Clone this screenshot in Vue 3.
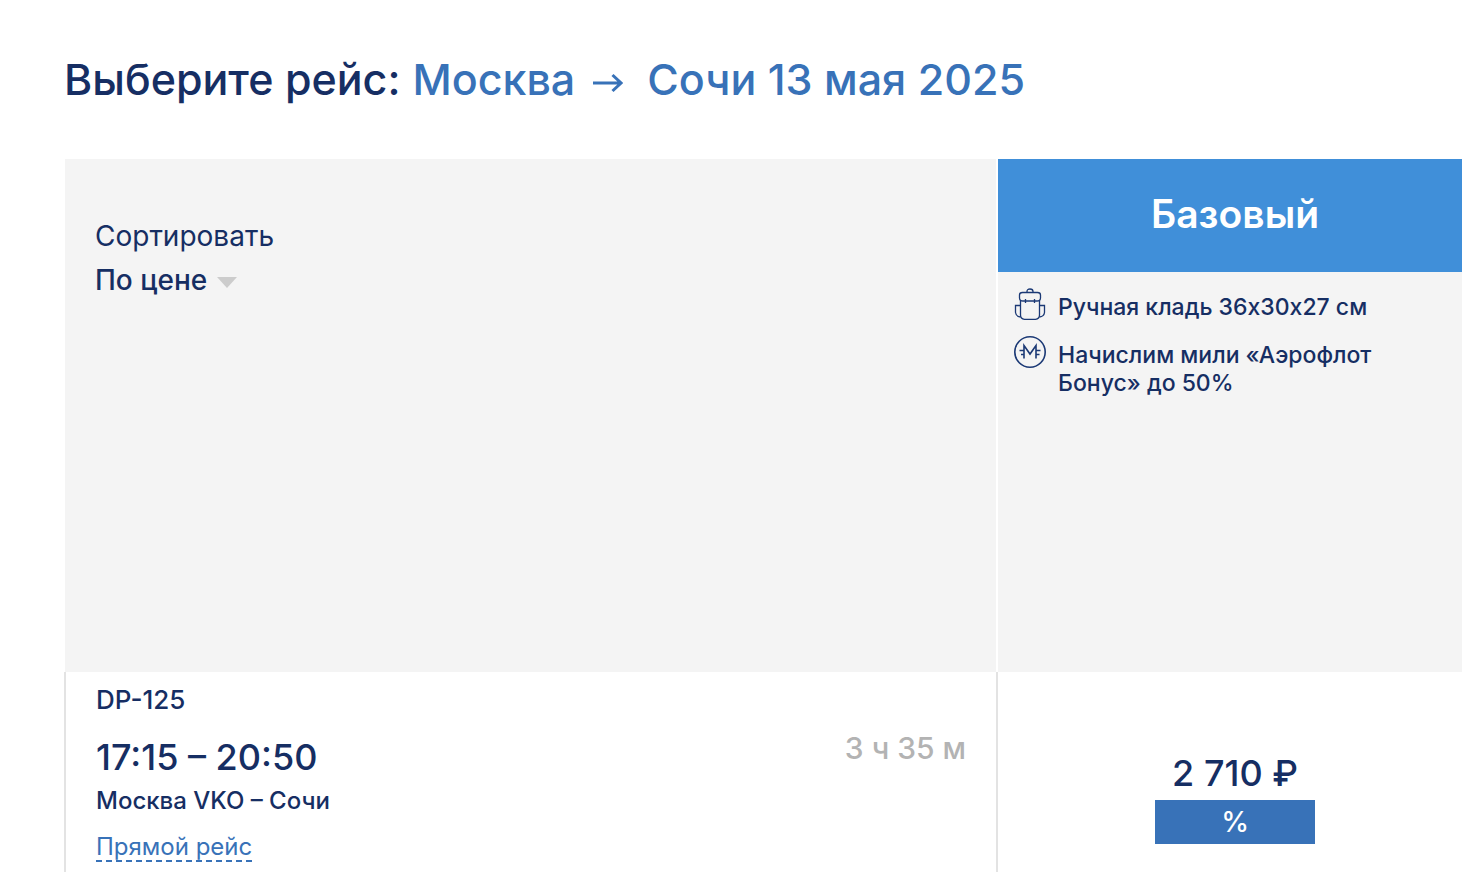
<script setup>
import { ref } from 'vue'

const sort = ref('price')
const route = { from: 'Москва', to: 'Сочи', date: '13 мая 2025' }
const flights = [
  {
    number: 'DP-125',
    time: '17:15 – 20:50',
    places: 'Москва VKO – Сочи',
    duration: '3 ч 35 м',
    price: '2 710 ₽',
  },
]
</script>

<template>
  <main class="page">
    <h1 class="title">
      <span>Выберите рейс:</span>
      <span class="route">
        <span>{{ route.from }}</span>
        <svg class="arrow" viewBox="0 0 30 20" aria-hidden="true">
          <path d="M0 10H28M19.500 2L28 10L19.500 18" />
        </svg>
        <span>{{ route.to }} {{ route.date }}</span>
      </span>
    </h1>

    <table class="fares">
      <colgroup>
        <col class="col-flight" />
        <col />
      </colgroup>
      <thead>
        <tr>
          <th class="sort-cell">
            <label class="sort-label" for="sort">Сортировать</label>
            <div class="sort-box">
              <select id="sort" v-model="sort" class="sort-select">
                <option value="price">По цене</option>
              </select>
              <svg class="caret" viewBox="0 0 20 11" aria-hidden="true">
                <path d="M0 0H20L10 11Z" />
              </svg>
            </div>
          </th>
          <th class="fare-cell" scope="col">
            <div class="fare-name">Базовый</div>
            <ul class="perks">
              <li>
                <svg class="perk-icon" viewBox="0 0 32 32" aria-hidden="true">
                  <path d="M13 4.500V3.500Q13 1 16 1T19 3.500V4.500" />
                  <path d="M8.500 4.500H23.500Q26.500 4.500 26.500 7V10Q26.500 13 23 13H9Q5.500 13 5.500 10V7Q5.500 4.500 8.500 4.500Z" />
                  <path d="M11.500 11V15M20.500 11V15M6.500 12V27Q6.500 31 10.500 31.300H21.500Q25.500 31 25.500 27V12" />
                  <path d="M6.500 17.500H1.500V24.500Q2 28.500 6.500 29M25.500 17.500H30.500V24.500Q30 28.500 25.500 29" />
                </svg>
                <span>Ручная кладь 36х30х27 см</span>
              </li>
              <li>
                <svg class="perk-icon miles" viewBox="0 0 32 32" aria-hidden="true">
                  <circle cx="16" cy="16" r="15.200" />
                  <path d="M10 22.500V9.500L16 18L22 9.500V22.500" />
                  <path d="M5.500 14.500H10M7 18.500H10M22 14.500H26.500M22 18.500H25.500" />
                </svg>
                <span>Начислим мили «Аэрофлот Бонус» до 50%</span>
              </li>
            </ul>
          </th>
        </tr>
      </thead>
      <tbody>
        <tr v-for="flight in flights" :key="flight.number">
          <td class="flight-cell">
            <div class="number">{{ flight.number }}</div>
            <div class="flight-row">
              <div>
                <div class="time">{{ flight.time }}</div>
                <div class="places">{{ flight.places }}</div>
              </div>
              <div class="duration">{{ flight.duration }}</div>
            </div>
            <a class="direct" href="#">Прямой рейс</a>
          </td>
          <td class="price-cell">
            <button class="price" type="button">
              <span>{{ flight.price }}</span>
              <span class="badge">%</span>
            </button>
          </td>
        </tr>
      </tbody>
    </table>
  </main>
</template>

<style>
html,
body {
  background: #fff;
  overflow: hidden;
}
</style>

<style scoped>
.page {
  box-sizing: border-box;
  padding: 49px 0 0 64px;
  color: #162e63;
  font-family: Inter, "Liberation Sans", sans-serif;
  font-weight: 500;
}
.title {
  display: flex;
  gap: 12px;
  margin: 0 0 50px;
  font-size: 43px;
  line-height: 60px;
  font-weight: 500;
  white-space: nowrap;
}
.route {
  display: flex;
  align-items: center;
  color: #3872b8;
}
.arrow {
  width: 30px;
  height: 20px;
  margin: 8px 24px 0 18px;
  fill: none;
  stroke: currentColor;
  stroke-width: 3;
}
.fares {
  width: calc(100% + 10px);
  table-layout: fixed;
  border-collapse: separate;
  border-spacing: 0;
}
.col-flight {
  width: 66.200%;
}
th,
td {
  box-sizing: border-box;
  padding: 0;
  vertical-align: top;
  text-align: left;
  font-weight: 500;
}
.sort-cell,
.fare-cell {
  height: 513px;
  background: #f4f4f4;
  border-left: 2px solid #fff;
}
.sort-cell {
  padding: 55px 30px 0;
  border-left-width: 1px;
}
.sort-label {
  display: block;
  font-size: 28px;
  line-height: 44px;
  font-weight: 400;
}
.sort-box {
  display: flex;
  align-items: center;
  gap: 10px;
}
.sort-select {
  appearance: none;
  field-sizing: content;
  padding: 0;
  border: 0;
  background: none;
  color: inherit;
  font: inherit;
  font-size: 28px;
  line-height: 44px;
}
.caret {
  width: 20px;
  height: 11px;
  margin-top: 4px;
  fill: #ccc;
}
.fare-name {
  height: 113px;
  background: #408fd9;
  color: #fff;
  font-size: 39px;
  line-height: 110px;
  font-weight: 600;
  text-align: center;
}
.perks {
  display: flex;
  flex-direction: column;
  gap: 15px;
  margin: 0;
  padding: 16px 60px 0 16px;
  list-style: none;
  font-size: 23px;
  line-height: 28px;
  font-weight: 500;
}
.perks li {
  display: flex;
  gap: 12px;
}
.perks span {
  padding-top: 5px;
}
.perk-icon {
  flex: none;
  width: 32px;
  height: 32px;
  fill: none;
  stroke: #1b3975;
  stroke-width: 1.300;
}
.miles {
  stroke-width: 1.600;
}
.flight-cell,
.price-cell {
  height: 220px;
  border-left: 2px solid #e3e3e3;
}
.flight-cell {
  padding: 8px 30px 0;
}
.number {
  font-size: 26px;
  line-height: 40px;
}
.flight-row {
  display: flex;
  justify-content: space-between;
  padding-top: 12px;
}
.time {
  font-size: 36px;
  line-height: 50px;
}
.places {
  font-size: 24px;
  line-height: 38px;
}
.duration {
  color: #b3b3b3;
  font-size: 30px;
  line-height: 32px;
}
.direct {
  display: inline-block;
  margin-top: 14px;
  border-bottom: 2px dashed #3872b8;
  color: #3872b8;
  font-size: 24px;
  line-height: 26px;
  font-weight: 400;
  text-decoration: none;
}
.price-cell {
  padding-top: 74px;
  text-align: center;
}
.price {
  display: inline-flex;
  flex-direction: column;
  align-items: stretch;
  width: 160px;
  padding: 0;
  border: 0;
  background: none;
  color: inherit;
  font: inherit;
  font-size: 36px;
  line-height: 54px;
}
.badge {
  background: #3872b8;
  color: #fff;
  font-size: 28px;
  line-height: 44px;
}
</style>
